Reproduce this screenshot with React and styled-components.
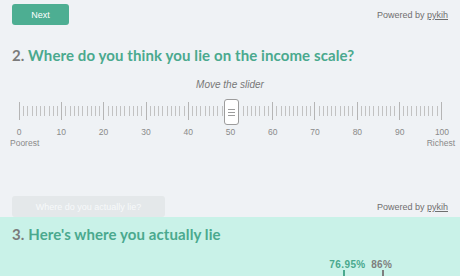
import React from 'react';
import styled, { createGlobalStyle } from 'styled-components';

const GlobalStyle = createGlobalStyle`
	html, body {
		margin: 0;
		padding: 0;
		background: #eff2f5;
	}
	body {
		font-family: 'Liberation Sans', Arial, sans-serif;
		overflow: hidden;
	}
`;

const TICKS = Array.from({ length: 101 }, (_, i) => i);
const LABELS = [0, 10, 20, 30, 40, 50, 60, 70, 80, 90, 100];
const MARKERS = [
	{ value: 76.95, label: '76.95%', tone: 'green', shift: 6 },
	{ value: 86, label: '86%', tone: 'grey', shift: -2 },
];

const App = () => (
	<>
		<GlobalStyle />
		<Page>
			<TopBar>
				<Button>Next</Button>
				<Powered>
					Powered by <a href="#pykih">pykih</a>
				</Powered>
			</TopBar>
			<Heading>
				<Num>2.</Num> Where do you think you lie on the income scale?
			</Heading>
			<Hint>Move the slider</Hint>
			<Slider>
				<Ruler>
					{TICKS.map((t) => (
						<Tick key={t} major={t % 10 === 0} />
					))}
					<Handle style={{ left: '50%' }}>
						<span />
						<span />
						<span />
					</Handle>
				</Ruler>
				<Labels>
					{LABELS.map((l) => (
						<Label key={l}>{l}</Label>
					))}
				</Labels>
				<Ends>
					<span>Poorest</span>
					<span>Richest</span>
				</Ends>
			</Slider>
			<BottomBar>
				<Button disabled wide>
					Where do you actually lie?
				</Button>
				<Powered>
					Powered by <a href="#pykih">pykih</a>
				</Powered>
			</BottomBar>
		</Page>
		<Result>
			<Heading>
				<Num>3.</Num> Here's where you actually lie
			</Heading>
			<Chart>
				{MARKERS.map((m) => (
					<Marker key={m.label} style={{ left: `${m.value}%` }}>
						<MarkerLabel tone={m.tone} style={{ marginLeft: m.shift }}>
							{m.label}
						</MarkerLabel>
						<Bar tone={m.tone} />
					</Marker>
				))}
				<Axis>
					{LABELS.map((l) => (
						<AxisTick key={l} />
					))}
				</Axis>
			</Chart>
		</Result>
	</>
);

const Page = styled.div`
	padding: 4px 12px 0;
`;

const TopBar = styled.div`
	display: flex;
	justify-content: space-between;
	align-items: center;
	height: 21px;
`;

const BottomBar = styled(TopBar)`
	margin-top: 47px;
`;

const Button = styled.button`
	width: ${(p) => (p.wide ? '153px' : '57px')};
	height: 21px;
	border: none;
	border-radius: 3px;
	background: ${(p) => (p.disabled ? '#e4e8ea' : '#4dae92')};
	color: ${(p) => (p.disabled ? '#f7f9fa' : '#ffffff')};
	font-family: 'Liberation Sans', Arial, sans-serif;
	font-size: 9px;
	padding: 0;
`;

const Powered = styled.div`
	font-size: 9px;
	color: #6f6f6f;
	margin-top: 1px;
	a {
		color: #6f6f6f;
		text-decoration: underline;
	}
`;

const Heading = styled.h2`
	margin: 20px 0 0;
	font-family: Lato, 'Noto Sans', sans-serif;
	font-weight: 700;
	font-size: 15px;
	line-height: 20px;
	color: #4aa98e;
	letter-spacing: 0.1px;
`;

const Num = styled.span`
	color: #7b7b7b;
`;

const Hint = styled.div`
	margin-top: 14px;
	text-align: center;
	font-style: italic;
	font-size: 10px;
	color: #777;
`;

const Slider = styled.div`
	margin: 12px 7px 0 7px;
`;

const Ruler = styled.div`
	position: relative;
	display: flex;
	justify-content: space-between;
	align-items: center;
	width: 423px;
	height: 18px;
`;

const Tick = styled.div`
	width: 1px;
	height: ${(p) => (p.major ? '18px' : '10px')};
	background: ${(p) => (p.major ? '#b5b5b5' : '#c2c2c2')};
`;

const Handle = styled.div`
	position: absolute;
	top: -3px;
	width: 13px;
	height: 24px;
	margin-left: -7px;
	background: #fff;
	border: 1px solid #9c9c9c;
	border-radius: 3px;
	display: flex;
	flex-direction: column;
	justify-content: center;
	align-items: center;
	gap: 2px;
	span {
		width: 7px;
		height: 1px;
		background: #9c9c9c;
	}
`;

const Labels = styled.div`
	display: flex;
	justify-content: space-between;
	width: 443px;
	margin: 7px 0 0 -10px;
`;

const Label = styled.span`
	width: 20px;
	text-align: center;
	font-size: 8.5px;
	color: #8a8a8a;
`;

const Ends = styled.div`
	display: flex;
	justify-content: space-between;
	width: 445px;
	margin: 1px 0 0 -9px;
	font-size: 8.5px;
	color: #8a8a8a;
	line-height: 11px;
`;

const Result = styled.section`
	background: #c9f2e8;
	padding: 1px 12px 0;
	height: 60px;
	h2 {
		margin-top: 6px;
	}
`;

const Chart = styled.div`
	position: relative;
	margin: 15px 0 0 7px;
	width: 423px;
	height: 20px;
`;

const Marker = styled.div`
	position: absolute;
	top: 0;
	display: flex;
	flex-direction: column;
	align-items: center;
	width: 0;
`;

const MarkerLabel = styled.span`
	font-size: 10px;
	font-weight: 700;
	letter-spacing: 0.4px;
	white-space: nowrap;
	color: ${(p) => (p.tone === 'green' ? '#4aa98e' : '#7e7e7e')};
`;

const Bar = styled.div`
	width: 2px;
	height: 12px;
	background: ${(p) => (p.tone === 'green' ? '#4aa98e' : '#7e7e7e')};
`;

const Axis = styled.div`
	position: absolute;
	left: 0;
	right: -1px;
	top: 19px;
	display: flex;
	justify-content: space-between;
`;

const AxisTick = styled.div`
	width: 1px;
	height: 4px;
	background: #a8b8b3;
`;

export default App;
